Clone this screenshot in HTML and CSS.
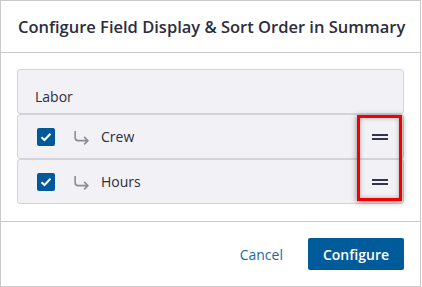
FILE: index.html
```html
<!DOCTYPE html>
<html lang="en">
<head>
    <meta charset="utf-8">
    <title>Configure Field Display</title>
    <link rel="stylesheet" href="styles.css">
</head>
<body>
    <div class="dialog">
        <!-- Header -->
        <div class="header">Configure Field Display &amp; Sort Order in Summary</div>

        <!-- Field list -->
        <div class="content">
            <div class="list">
                <div class="row group">Labor</div>
                <div class="row">
                    <span class="check"><svg width="12" height="10" viewBox="0 0 12 10"><path d="M1.5 5.2 L4.5 8 L10.5 1.8" fill="none" stroke="#fff" stroke-width="2"/></svg></span>
                    <svg class="child" width="17" height="17" viewBox="0 0 16 16"><path d="M2 1 V7 Q2 10 5 10 H14 M10.5 6.5 L14 10 L10.5 13.5" fill="none" stroke="#8c8c98" stroke-width="1.5"/></svg>
                    <span class="label">Crew</span>
                    <span class="drag"></span>
                </div>
                <div class="row">
                    <span class="check"><svg width="12" height="10" viewBox="0 0 12 10"><path d="M1.5 5.2 L4.5 8 L10.5 1.8" fill="none" stroke="#fff" stroke-width="2"/></svg></span>
                    <svg class="child" width="17" height="17" viewBox="0 0 16 16"><path d="M2 1 V7 Q2 10 5 10 H14 M10.5 6.5 L14 10 L10.5 13.5" fill="none" stroke="#8c8c98" stroke-width="1.5"/></svg>
                    <span class="label">Hours</span>
                    <span class="drag"></span>
                </div>
                <!-- highlight over the drag handles -->
                <div class="highlight"></div>
            </div>
        </div>

        <!-- Footer -->
        <div class="footer">
            <button class="btn link">Cancel</button>
            <button class="btn primary">Configure</button>
        </div>
    </div>
</body>
</html>
```

FILE: styles.css
```css
body {
    margin: 0;
    font-family: 'Open Sans', sans-serif;
    background: #fff;
}
.dialog {
    width: 419px;
    height: 285px;
    border: 1px solid #c9c9ce;
    display: flex;
    flex-direction: column;
}
.header {
    height: 52px;
    box-sizing: border-box;
    border-bottom: 1px solid #c9c9d0;
    padding: 0 0 0 17px;
    display: flex;
    align-items: center;
    white-space: nowrap;
    font-size: 16.5px;
    font-weight: 600;
    color: #2d2d3d;
}
.content {
    height: 169px;
    padding: 16px 16px 0 16px;
    box-sizing: border-box;
    border-bottom: 1px solid #c9c9d0;
}
.list {
    position: relative;
}
.row {
    height: 45px;
    box-sizing: border-box;
    background: #f1f1f6;
    border: 1px solid #d3d3da;
    border-radius: 3px;
    display: flex;
    align-items: center;
    padding-left: 19px;
    font-size: 14px;
    color: #2d2d3d;
}
.row.group {
    align-items: flex-end;
    padding-left: 17px;
    padding-bottom: 7px;
}
.check {
    width: 18px;
    height: 18px;
    border-radius: 2px;
    background: #005a9a;
    display: flex;
    align-items: center;
    justify-content: center;
}
.child {
    margin-left: 18px;
    margin-top: 4px;
}
.label {
    margin-left: 11px;
    flex: 1;
}
.drag {
    width: 16px;
    height: 6px;
    border-top: 2px solid #35354a;
    border-bottom: 2px solid #35354a;
    box-sizing: border-box;
    margin-right: 15px;
}
.highlight {
    position: absolute;
    left: 340px;
    top: 46px;
    width: 39px;
    height: 80px;
    border: 3px solid #f10000;
    box-shadow: 0 1px 6px rgba(0, 0, 0, 0.45), inset 0 0 4px rgba(0, 0, 0, 0.3);
}
.footer {
    flex: 1;
    display: flex;
    justify-content: flex-end;
    align-items: center;
    padding-right: 16px;
    gap: 10px;
}
.btn {
    font-family: 'Open Sans', sans-serif;
    font-size: 14px;
    border: none;
    cursor: pointer;
    border-radius: 2px;
    height: 32px;
    padding: 0 15px;
}
.btn.link {
    background: none;
    color: #1d68a3;
}
.btn.primary {
    background: #005b9a;
    color: #fff;
    font-weight: 600;
}
```
